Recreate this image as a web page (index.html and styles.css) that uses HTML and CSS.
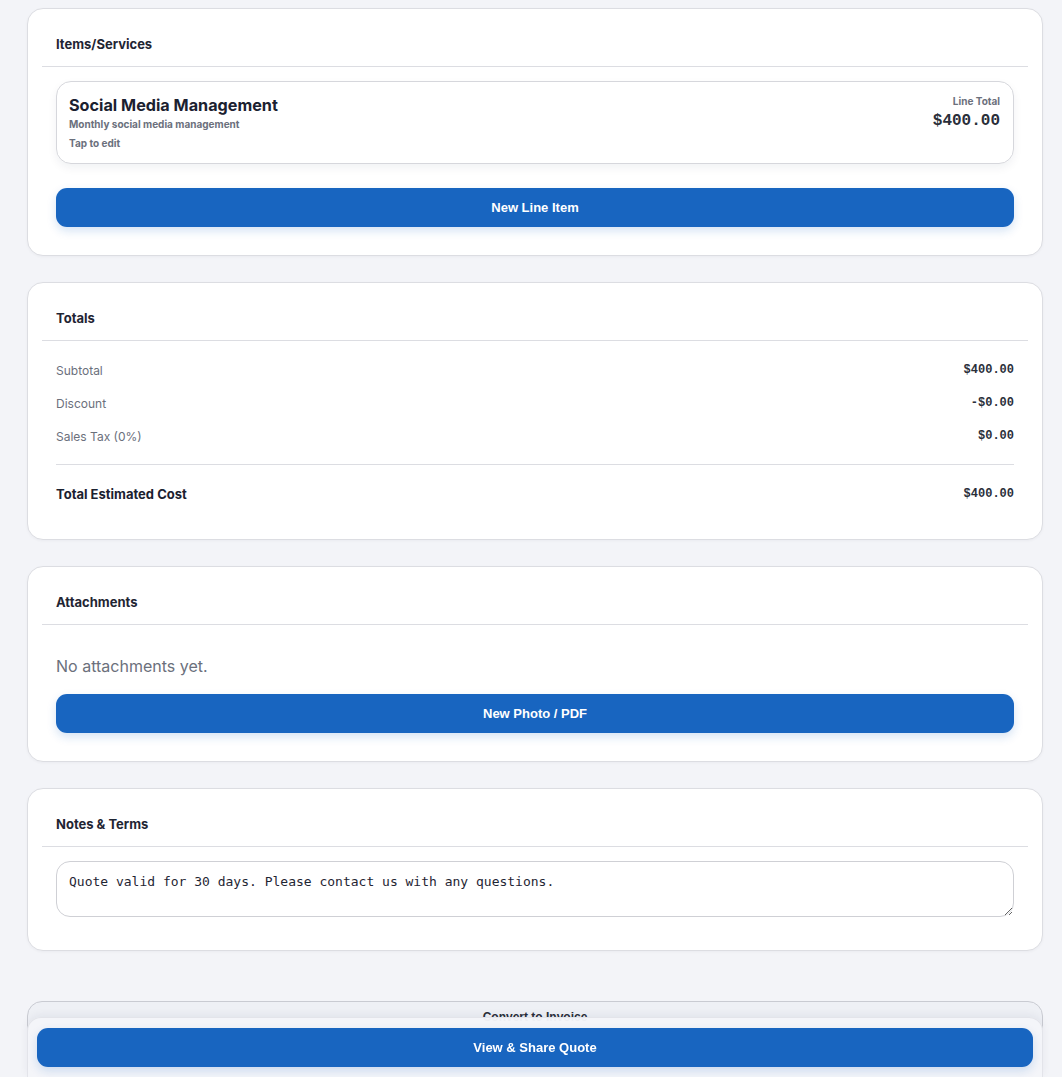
FILE: index.html
```html
<!DOCTYPE html>
<html lang="en">
<head>
<meta charset="utf-8">
<title>Quote</title>
<link rel="stylesheet" href="styles.css">
</head>
<body>
<main class="page">
  <section class="card">
    <header class="card-head">Items/Services</header>
    <div class="card-body">
      <div class="line-item">
        <div class="li-main">
          <div class="li-title">Social Media Management</div>
          <div class="li-desc">Monthly social media management</div>
          <div class="li-hint">Tap to edit</div>
        </div>
        <div class="li-side">
          <div class="li-label">Line Total</div>
          <div class="li-total">$400.00</div>
        </div>
      </div>
      <button class="btn-primary btn-gap">New Line Item</button>
    </div>
  </section>

  <section class="card">
    <header class="card-head">Totals</header>
    <div class="card-body">
      <div class="row"><span class="row-label">Subtotal</span><span class="row-val">$400.00</span></div>
      <div class="row"><span class="row-label">Discount</span><span class="row-val">-$0.00</span></div>
      <div class="row"><span class="row-label">Sales Tax (0%)</span><span class="row-val">$0.00</span></div>
      <div class="divider"></div>
      <div class="row row-total"><span class="row-label">Total Estimated Cost</span><span class="row-val">$400.00</span></div>
    </div>
  </section>

  <section class="card">
    <header class="card-head">Attachments</header>
    <div class="card-body">
      <p class="empty">No attachments yet.</p>
      <button class="btn-primary">New Photo / PDF</button>
    </div>
  </section>

  <section class="card">
    <header class="card-head">Notes &amp; Terms</header>
    <div class="card-body notes-body">
      <textarea class="notes">Quote valid for 30 days. Please contact us with any questions.</textarea>
    </div>
  </section>

  <button class="btn-secondary">Convert to Invoice</button>
</main>

<div class="bottom-bar">
  <button class="btn-primary">View &amp; Share Quote</button>
</div>
</body>
</html>
```

FILE: styles.css
```css
* { box-sizing: border-box; }

html, body {
  margin: 0;
  background: #f3f4f8;
}

body {
  font-family: Inter, "Noto Sans", sans-serif;
  color: #1f2533;
  height: 1077px;
  overflow: hidden;
}

.page {
  padding: 8px 19px 20px 27px;
  display: flex;
  flex-direction: column;
  gap: 26px;
}

.card {
  background: #ffffff;
  border: 1px solid #dcdde2;
  border-radius: 16px;
  padding: 14px;
  box-shadow: 0 1px 3px rgba(20, 30, 60, 0.04);
}

.card-head {
  padding: 14px;
  font-size: 13px;
  line-height: 15px;
  font-weight: 700;
  color: #1f2533;
  border-bottom: 1px solid #dcdde2;
}

.card-body {
  padding: 14px 14px 14px;
}

.line-item {
  display: flex;
  justify-content: space-between;
  align-items: flex-start;
  border: 1px solid #d6d7dc;
  border-radius: 15px;
  padding: 12px 13px 14px 12px;
  box-shadow: 0 4px 10px rgba(20, 30, 60, 0.06);
}

.li-title {
  font-size: 16.2px;
  line-height: 22px;
  font-weight: 700;
  color: #1b2130;
}

.li-desc {
  margin-top: 1px;
  font-size: 10px;
  line-height: 14px;
  font-weight: 700;
  color: #6b707c;
}

.li-hint {
  margin-top: 6px;
  font-size: 10px;
  line-height: 12px;
  font-weight: 700;
  color: #6b707c;
}

.li-side {
  text-align: right;
  padding-top: 1px;
}

.li-label {
  font-size: 10px;
  line-height: 12px;
  font-weight: 700;
  color: #6b707c;
}

.li-total {
  margin-top: 4px;
  font-family: "Liberation Mono", monospace;
  font-size: 16px;
  line-height: 20px;
  font-weight: 700;
  color: #2a2f3a;
}

.btn-primary {
  display: block;
  width: 100%;
  height: 39px;
  border: 0;
  border-radius: 11px;
  background: #1865c0;
  color: #ffffff;
  font-family: "Liberation Sans", Arial, sans-serif;
  font-size: 13px;
  font-weight: 700;
  box-shadow: 0 4px 10px rgba(24, 101, 192, 0.18);
}

.btn-gap { margin-top: 24px; }

.row {
  display: flex;
  justify-content: space-between;
  align-items: flex-start;
  height: 33px;
  padding-top: 8px;
}

.row-label {
  font-size: 12px;
  line-height: 15px;
  color: #6b707c;
}

.row-val {
  font-family: "Liberation Mono", monospace;
  font-size: 12px;
  line-height: 15px;
  font-weight: 700;
  color: #2a2f3a;
}

.divider {
  margin-top: 10px;
  height: 1px;
  background: #dcdde2;
}

.row-total {
  margin-top: 14px;
  height: 32px;
}

.row-total .row-label {
  font-size: 13px;
  font-weight: 700;
  color: #1b2130;
}

.empty {
  margin: 16px 0 17px;
  font-size: 16px;
  line-height: 22px;
  color: #6b707c;
}

.notes-body {
  padding-bottom: 19px;
}

.notes {
  display: block;
  width: 100%;
  height: 56px;
  border: 1px solid #cfd0d5;
  border-radius: 14px;
  padding: 12px;
  font-family: "DejaVu Sans Mono", monospace;
  font-size: 13px;
  line-height: 15px;
  color: #1f2533;
  background: #fff;
  resize: vertical;
}

.btn-secondary {
  margin-top: 24px;
  width: 100%;
  height: 40px;
  border: 1px solid #c9cbd2;
  border-radius: 15px;
  background: #eef0f5;
  color: #2a2f3a;
  font-family: "Liberation Sans", Arial, sans-serif;
  font-size: 12px;
  font-weight: 700;
  padding: 8px 0 0;
  display: flex;
  justify-content: center;
  align-items: flex-start;
}

.bottom-bar {
  position: fixed;
  left: 27px;
  right: 19px;
  bottom: 0;
  padding: 10px 9px 10px;
  background: rgba(244, 245, 249, 0.97);
  border: 1px solid #e3e4ea;
  border-bottom: 0;
  border-radius: 14px 14px 0 0;
  box-shadow: 0 -2px 8px rgba(20, 30, 60, 0.06);
}
```
